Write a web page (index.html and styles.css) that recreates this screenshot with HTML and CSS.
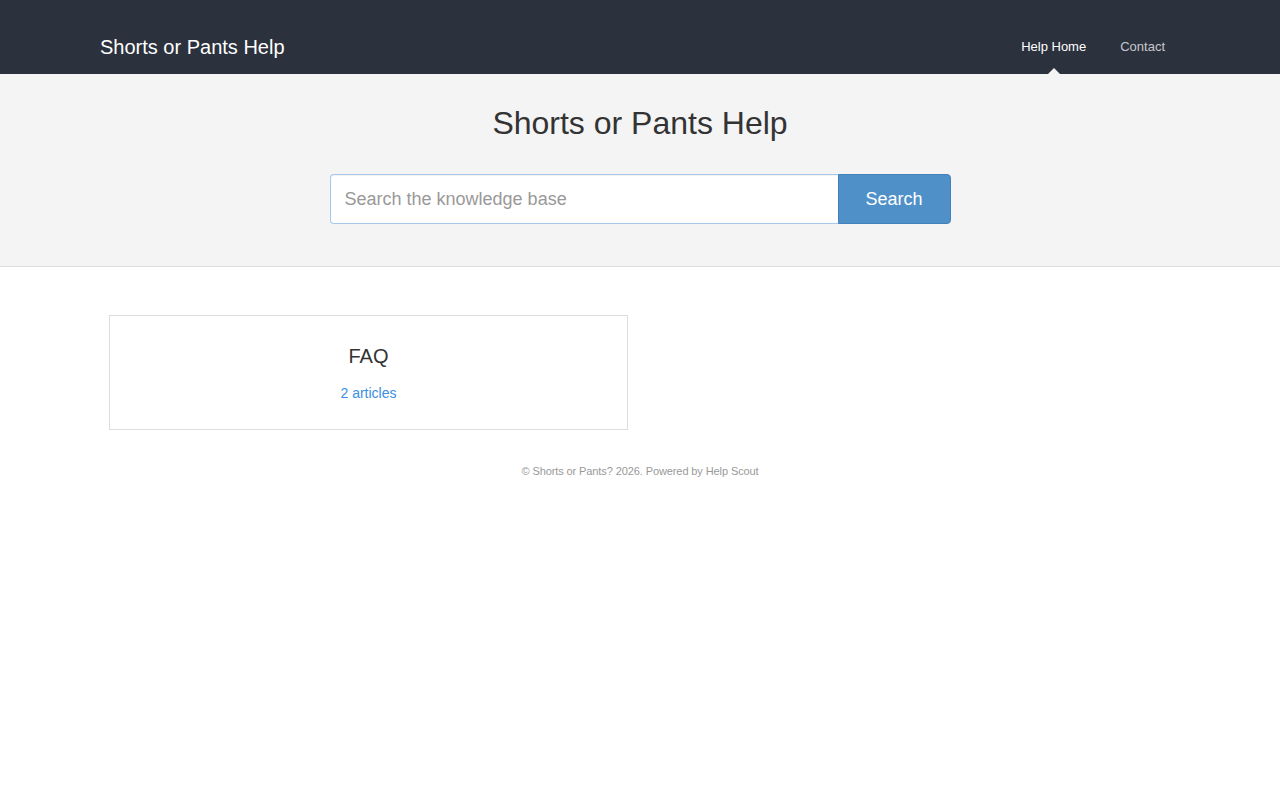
FILE: index.html
```html
<!DOCTYPE html>
<html lang="en">
<head>
<meta charset="utf-8">
<title>Shorts or Pants Help</title>
<link rel="stylesheet" href="styles.css">
</head>
<body>
<header class="navbar">
  <div class="navbar-inner">
    <a class="brand" href="#">Shorts or Pants Help</a>
    <nav class="nav">
      <a class="nav-link active" href="#">Help Home</a>
      <a class="nav-link" href="#">Contact</a>
    </nav>
  </div>
</header>
<section class="hero">
  <h1 class="hero-title">Shorts or Pants Help</h1>
  <form class="search">
    <input class="search-input" type="text" placeholder="Search the knowledge base">
    <button class="search-btn" type="button">Search</button>
  </form>
</section>
<main class="content">
  <div class="categories">
    <a class="category" href="#">
      <h3 class="category-title">FAQ</h3>
      <span class="category-count">2 articles</span>
    </a>
  </div>
  <footer class="footer">© Shorts or Pants? 2026. Powered by <a href="#">Help Scout</a></footer>
</main>
</body>
</html>
```

FILE: styles.css
```css
* { box-sizing: border-box; }
html, body { margin: 0; padding: 0; }
body {
  font-family: "Liberation Sans", Arial, Helvetica, sans-serif;
  background: #fff;
  color: #333;
}
a { text-decoration: none; }

.navbar {
  background: #2b313d;
  height: 74px;
}
.navbar-inner {
  max-width: 1080px;
  margin: 0 auto;
  height: 100%;
  padding-top: 20px;
  display: flex;
  align-items: stretch;
  justify-content: space-between;
}
.brand {
  color: #fff;
  font-size: 20px;
  line-height: 24px;
  display: flex;
  align-items: center;
}
.nav {
  display: flex;
  gap: 4px;
  align-items: stretch;
}
.nav-link {
  position: relative;
  color: #c5c8cd;
  font-size: 13px;
  padding: 0 15px 2px;
  display: flex;
  align-items: center;
}
.nav-link.active { color: #fff; }
.nav-link.active::after {
  content: "";
  position: absolute;
  bottom: 0;
  left: 50%;
  margin-left: -6px;
  border-left: 6px solid transparent;
  border-right: 6px solid transparent;
  border-bottom: 6px solid #f4f4f4;
}

.hero {
  background: #f4f4f4;
  border-bottom: 1px solid #dddddd;
  padding: 30px 0 42px;
  text-align: center;
}
.hero-title {
  margin: 0;
  font-size: 32px;
  line-height: 38px;
  font-weight: normal;
  color: #333;
}
.search {
  margin: 32px auto 0;
  width: 621px;
  display: flex;
  height: 50px;
}
.search-input {
  flex: 1;
  height: 50px;
  border: 1px solid #a6c8ec;
  border-right: none;
  border-radius: 4px 0 0 4px;
  padding: 0 14px;
  font-family: inherit;
  font-size: 18px;
  color: #555;
  background: #fff;
  box-shadow: inset 0 1px 1px rgba(0,0,0,0.05);
  outline: none;
}
.search-input::placeholder { color: #999; }
.search-btn {
  width: 113px;
  height: 50px;
  background: #4f90c9;
  border: 1px solid #4381bb;
  border-radius: 0 4px 4px 0;
  color: #fff;
  font-family: inherit;
  font-size: 18px;
  padding: 0;
}

.content {
  width: 1062px;
  margin: 48px auto 0;
}
.categories {
  display: grid;
  grid-template-columns: 519px 519px;
  gap: 24px;
}
.category {
  display: block;
  border: 1px solid #dddddd;
  text-align: center;
  padding: 28px 10px 26px;
}
.category-title {
  margin: 0 0 15px;
  font-size: 20px;
  line-height: 24px;
  font-weight: normal;
  color: #333;
}
.category-count {
  display: block;
  font-size: 14px;
  line-height: 20px;
  color: #3a8ee3;
}
.footer {
  margin-top: 33px;
  text-align: center;
  font-size: 11px;
  line-height: 16px;
  color: #999;
  letter-spacing: -0.1px;
}
.footer a { color: #999; }
```
